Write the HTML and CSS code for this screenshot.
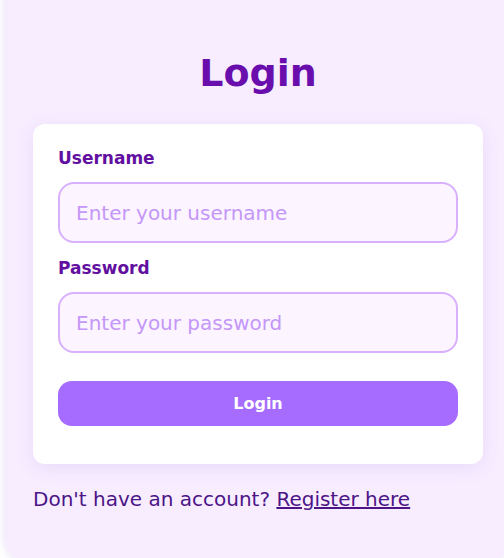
FILE: index.html
```html
<!DOCTYPE html>
<html lang="en">
<head>
<meta charset="utf-8">
<title>Login</title>
<link rel="stylesheet" href="styles.css">
</head>
<body>
<div class="panel">
  <h1 class="title">Login</h1>
  <form class="card">
    <label class="label" for="username">Username</label>
    <input class="field" id="username" type="text" placeholder="Enter your username">
    <label class="label" for="password">Password</label>
    <input class="field" id="password" type="password" placeholder="Enter your password">
    <button class="btn" type="button">Login</button>
  </form>
  <p class="footer">Don't have an account? <a class="link" href="#">Register here</a></p>
</div>
</body>
</html>
```

FILE: styles.css
```css
html, body {
  margin: 0;
  padding: 0;
  overflow: hidden;
  background: #ffffff;
}
body {
  font-family: "DejaVu Sans", "Open Sans", sans-serif;
}
.panel {
  box-sizing: border-box;
  margin: -20px 0 0 5px;
  width: 506px;
  height: 580px;
  padding: 68px 28px 0 28px;
  background: #f7edff;
  border-radius: 20px;
  box-shadow: 0 0 10px rgba(120, 70, 170, 0.18);
}
.title {
  margin: 0;
  height: 76px;
  text-align: center;
  font-size: 38px;
  line-height: 50px;
  font-weight: 700;
  color: #6a0dad;
}
.card {
  display: flex;
  flex-direction: column;
  box-sizing: border-box;
  width: 450px;
  padding: 24px 25px 38px;
  background: #ffffff;
  border-radius: 12px;
  box-shadow: 0 4px 18px rgba(150, 90, 210, 0.13);
}
.label {
  font-size: 17px;
  line-height: 20px;
  font-weight: 600;
  color: #62109f;
  margin-bottom: 14px;
}
.field {
  box-sizing: border-box;
  height: 61px;
  padding: 0 16px;
  border: 2px solid #d8b0fd;
  border-radius: 16px;
  background: #fcf4ff;
  font-family: inherit;
  font-size: 20px;
  color: #4c1d95;
  outline: none;
  margin-bottom: 15px;
}
.field::placeholder {
  color: #c497f8;
}
.btn {
  margin-top: 13px;
  height: 45px;
  border: none;
  border-radius: 14px;
  background: #a66bff;
  color: #ffffff;
  font-family: inherit;
  font-size: 16px;
  font-weight: 700;
}
.footer {
  margin: 21px 0 0;
  font-size: 20px;
  line-height: 28px;
  color: #4c1487;
}
.link {
  color: #4c1487;
  text-decoration: underline;
}
```
